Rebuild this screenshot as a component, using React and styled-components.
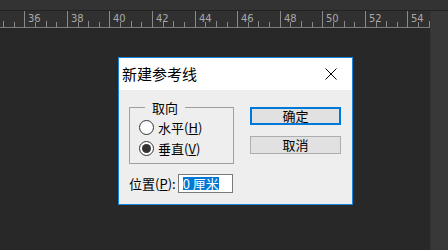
import React from 'react';
import styled, { createGlobalStyle } from 'styled-components';

const GlobalStyle = createGlobalStyle`
  html, body {
    margin: 0;
    padding: 0;
    background: #282828;
  }
`;

const Screen = styled.div`
  position: relative;
  width: 448px;
  height: 250px;
  display: flex;
  flex-direction: column;
  overflow: hidden;
  font-family: "Noto Sans CJK SC", "Noto Sans", sans-serif;
`;

const TopBar = styled.div`
  height: 10px;
  background: #333333;
  border-bottom: 1px solid #222222;
`;

const Workspace = styled.div`
  flex: 1;
  display: flex;
`;

const Main = styled.div`
  flex: 1;
  display: flex;
  flex-direction: column;
`;

const RulerBox = styled.div`
  height: 17px;
  background: #303030;
  svg {
    display: block;
  }
`;

const Canvas = styled.div`
  flex: 1;
  background: #282828;
`;

const SideStrip = styled.div`
  width: 18px;
  background: #383838;
  border-left: 1px solid #333333;
`;

const Dialog = styled.div`
  position: absolute;
  left: 118px;
  top: 57px;
  width: 235px;
  height: 148px;
  box-sizing: border-box;
  border: 1px solid #1883d7;
  background: #eeeeee;
  display: flex;
  flex-direction: column;
  color: #000;
`;

const TitleBar = styled.div`
  height: 32px;
  background: #ffffff;
  display: flex;
  align-items: center;
  padding-left: 3px;
`;

const Title = styled.div`
  flex: 1;
  font-size: 15px;
  line-height: 20px;
`;

const CloseButton = styled.div`
  width: 42px;
  height: 32px;
  display: flex;
  align-items: center;
  justify-content: center;
`;

const Body = styled.div`
  flex: 1;
  display: flex;
  padding: 9px 11px 0 10px;
  font-size: 13px;
`;

const LeftCol = styled.div`
  display: flex;
  flex-direction: column;
`;

const RightCol = styled.div`
  display: flex;
  flex-direction: column;
  gap: 11px;
  margin-left: 16px;
  padding-top: 8px;
`;

const Group = styled.fieldset`
  width: 105px;
  box-sizing: border-box;
  margin: 0;
  padding: 1px 8px 4px 9px;
  border: 1px solid #a0a0a0;
  min-width: 0;
`;

const Legend = styled.legend`
  padding: 0 7px;
  margin-left: 6px;
  font-size: 13px;
  line-height: 17px;
`;

const RadioRow = styled.label`
  height: 21px;
  display: flex;
  align-items: center;
  gap: 4px;
  line-height: 17px;
`;

const RadioCircle = styled.span`
  width: 15px;
  height: 15px;
  box-sizing: border-box;
  border-radius: 50%;
  border: 1px solid #333333;
  background: #ffffff;
  display: flex;
  align-items: center;
  justify-content: center;
  &::after {
    content: '';
    width: 9px;
    height: 9px;
    border-radius: 50%;
    background: #333333;
    display: ${({ checked }) => (checked ? 'block' : 'none')};
  }
`;

const Key = styled.span`
  text-decoration: underline;
  text-underline-offset: 1px;
`;

const PositionRow = styled.div`
  margin-top: 10px;
  display: flex;
  align-items: center;
  gap: 2px;
  line-height: 17px;
`;

const Input = styled.div`
  width: 55px;
  height: 19px;
  box-sizing: border-box;
  border: 1px solid #7a7a7a;
  background: #ffffff;
  display: flex;
  align-items: center;
  padding-left: 4px;
`;

const Selected = styled.span`
  background: #0078d7;
  color: #ffffff;
  line-height: 13px;
  height: 13px;
  display: inline-block;
`;

const Button = styled.div`
  width: 91px;
  height: 18px;
  box-sizing: border-box;
  border: ${({ primary }) => (primary ? '2px solid #0078d7' : '1px solid #adadad')};
  background: #e1e1e1;
  display: flex;
  align-items: center;
  justify-content: center;
  line-height: 16px;
`;

function Ruler() {
  const start = 24.3;
  const step = 42.57;
  const labels = [36, 38, 40, 42, 44, 46, 48, 50, 52, 54];
  const ticks = [];
  for (let k = -1; k < labels.length; k++) {
    const x0 = start + k * step;
    for (let q = 1; q < 4; q++) {
      const x = Math.round(x0 + (q * step) / 4) + 0.5;
      if (x < 0 || x > 430) continue;
      ticks.push(
        <line key={`${k}-${q}`} x1={x} x2={x} y1={q === 2 ? 10 : 11} y2={16} stroke="#8a8a8a" />,
      );
    }
  }
  return (
    <svg width="430" height="17">
      <line x1="0" x2="430" y1="16.5" y2="16.5" stroke="#7a7a7a" />
      {ticks}
      {labels.map((n, i) => {
        const x = Math.round(start + i * step) + 0.5;
        return (
          <g key={n}>
            <line x1={x} x2={x} y1={0} y2={17} stroke="#8a8a8a" />
            <text x={x + 3.5} y={10.5} fontSize="10" fill="#a8a8a8" fontFamily="'DejaVu Sans', sans-serif">
              {n}
            </text>
          </g>
        );
      })}
    </svg>
  );
}

export default function App() {
  return (
    <>
      <GlobalStyle />
      <Screen>
        <TopBar />
        <Workspace>
          <Main>
            <RulerBox>
              <Ruler />
            </RulerBox>
            <Canvas />
          </Main>
          <SideStrip />
        </Workspace>
        <Dialog>
          <TitleBar>
            <Title>新建参考线</Title>
            <CloseButton>
              <svg width="12" height="12" viewBox="0 0 12 12">
                <path d="M0.5 0.5 L11.5 11.5 M11.5 0.5 L0.5 11.5" stroke="#000" strokeWidth="1" />
              </svg>
            </CloseButton>
          </TitleBar>
          <Body>
            <LeftCol>
              <Group>
                <Legend>取向</Legend>
                <RadioRow>
                  <RadioCircle />
                  <span>
                    水平(<Key>H</Key>)
                  </span>
                </RadioRow>
                <RadioRow>
                  <RadioCircle checked />
                  <span>
                    垂直(<Key>V</Key>)
                  </span>
                </RadioRow>
              </Group>
              <PositionRow>
                <span>
                  位置(<Key>P</Key>):
                </span>
                <Input>
                  <Selected>0 厘米</Selected>
                </Input>
              </PositionRow>
            </LeftCol>
            <RightCol>
              <Button primary>确定</Button>
              <Button>取消</Button>
            </RightCol>
          </Body>
        </Dialog>
      </Screen>
    </>
  );
}
